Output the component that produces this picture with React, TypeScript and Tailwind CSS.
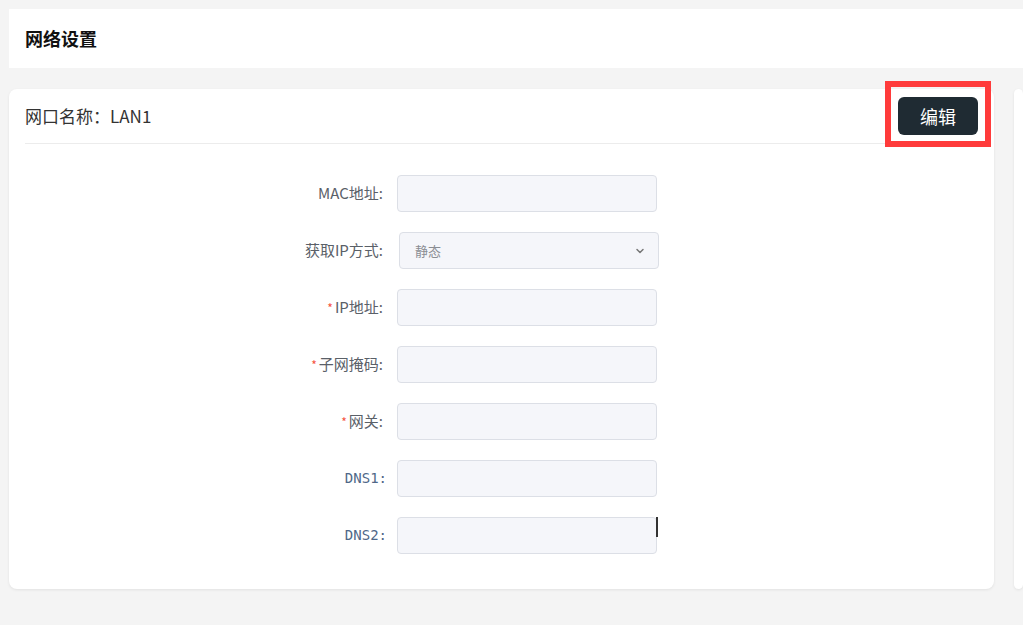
import { ChevronDown } from 'lucide-react';

const cjk = { fontFamily: '"Noto Sans CJK SC", "Noto Sans", sans-serif' };
const mono = { fontFamily: '"DejaVu Sans Mono", "Noto Sans CJK SC", monospace' };

type Field = {
  label: string;
  required?: boolean;
  mono?: boolean;
  select?: string;
  caret?: boolean;
};

const fields: Field[] = [
  { label: 'MAC地址' },
  { label: '获取IP方式', select: '静态' },
  { label: 'IP地址', required: true },
  { label: '子网掩码', required: true },
  { label: '网关', required: true },
  { label: 'DNS1', mono: true },
  { label: 'DNS2', mono: true, caret: true },
];

function FormRow({ field }: { field: Field }) {
  return (
    <div className="flex items-center h-[37px]">
      <label
        className={`w-[100px] shrink-0 text-right whitespace-nowrap ${
          field.mono ? 'text-[14px] text-[#4f6788]' : 'text-[15px] text-[#5a6068] pr-[4px]'
        }`}
        style={field.mono ? mono : cjk}
      >
        {field.required && <span className="text-[#f5533d] text-[12px] mr-[2px]">*</span>}
        {field.label}:
      </label>
      {field.select ? (
        <div className="ml-[12px] w-[260px] h-[37px] flex items-center justify-between pl-[15px] pr-[12px] rounded-[4px] border border-[#dcdfe6] bg-[#f5f6fa]">
          <span className="text-[13px] text-[#8a8d93]">{field.select}</span>
          <ChevronDown className="w-[12px] h-[12px] text-[#777]" strokeWidth={3} />
        </div>
      ) : (
        <div className="relative ml-[10px]">
          <input className="block w-[260px] h-[37px] rounded-[4px] border border-[#dcdfe6] bg-[#f5f6fa] outline-none" />
          {field.caret && (
            <span className="absolute left-[259px] top-0 w-[2px] h-[20px] bg-[#333]" />
          )}
        </div>
      )}
    </div>
  );
}

export default function App() {
  return (
    <div className="min-h-screen bg-[#f4f4f4] p-[9px] pr-0 overflow-hidden" style={cjk}>
      <div className="bg-white h-[59px] flex items-center px-4">
        <h1 className="text-[18px] font-bold text-[#111]">网络设置</h1>
      </div>

      <div className="mt-[21px] flex gap-[20px]">
        <div className="w-[985px] shrink-0 h-[500px] bg-white rounded-[8px] shadow-[0_1px_3px_rgba(0,0,0,0.08)] px-4">
          <div className="h-[55px] flex items-center justify-between border-b border-[#ececec]">
            <span className="text-[17px] text-[#333]">网口名称：LAN1</span>
            <div className="relative">
              <button className="w-[80px] h-[38px] rounded-[6px] bg-[#1f2b33] text-white text-[18px]">
                编辑
              </button>
              <div className="absolute -left-[13px] -right-[13px] -top-[16px] -bottom-[12px] border-[6px] border-[#ff3b3b] pointer-events-none" />
            </div>
          </div>

          <div className="pl-[262px] pt-[31px] flex flex-col gap-[20px]">
            {fields.map((f) => (
              <FormRow key={f.label} field={f} />
            ))}
          </div>
        </div>

        <div className="flex-1 h-[500px] bg-white rounded-[8px] shadow-[0_1px_3px_rgba(0,0,0,0.08)]" />
      </div>
    </div>
  );
}
